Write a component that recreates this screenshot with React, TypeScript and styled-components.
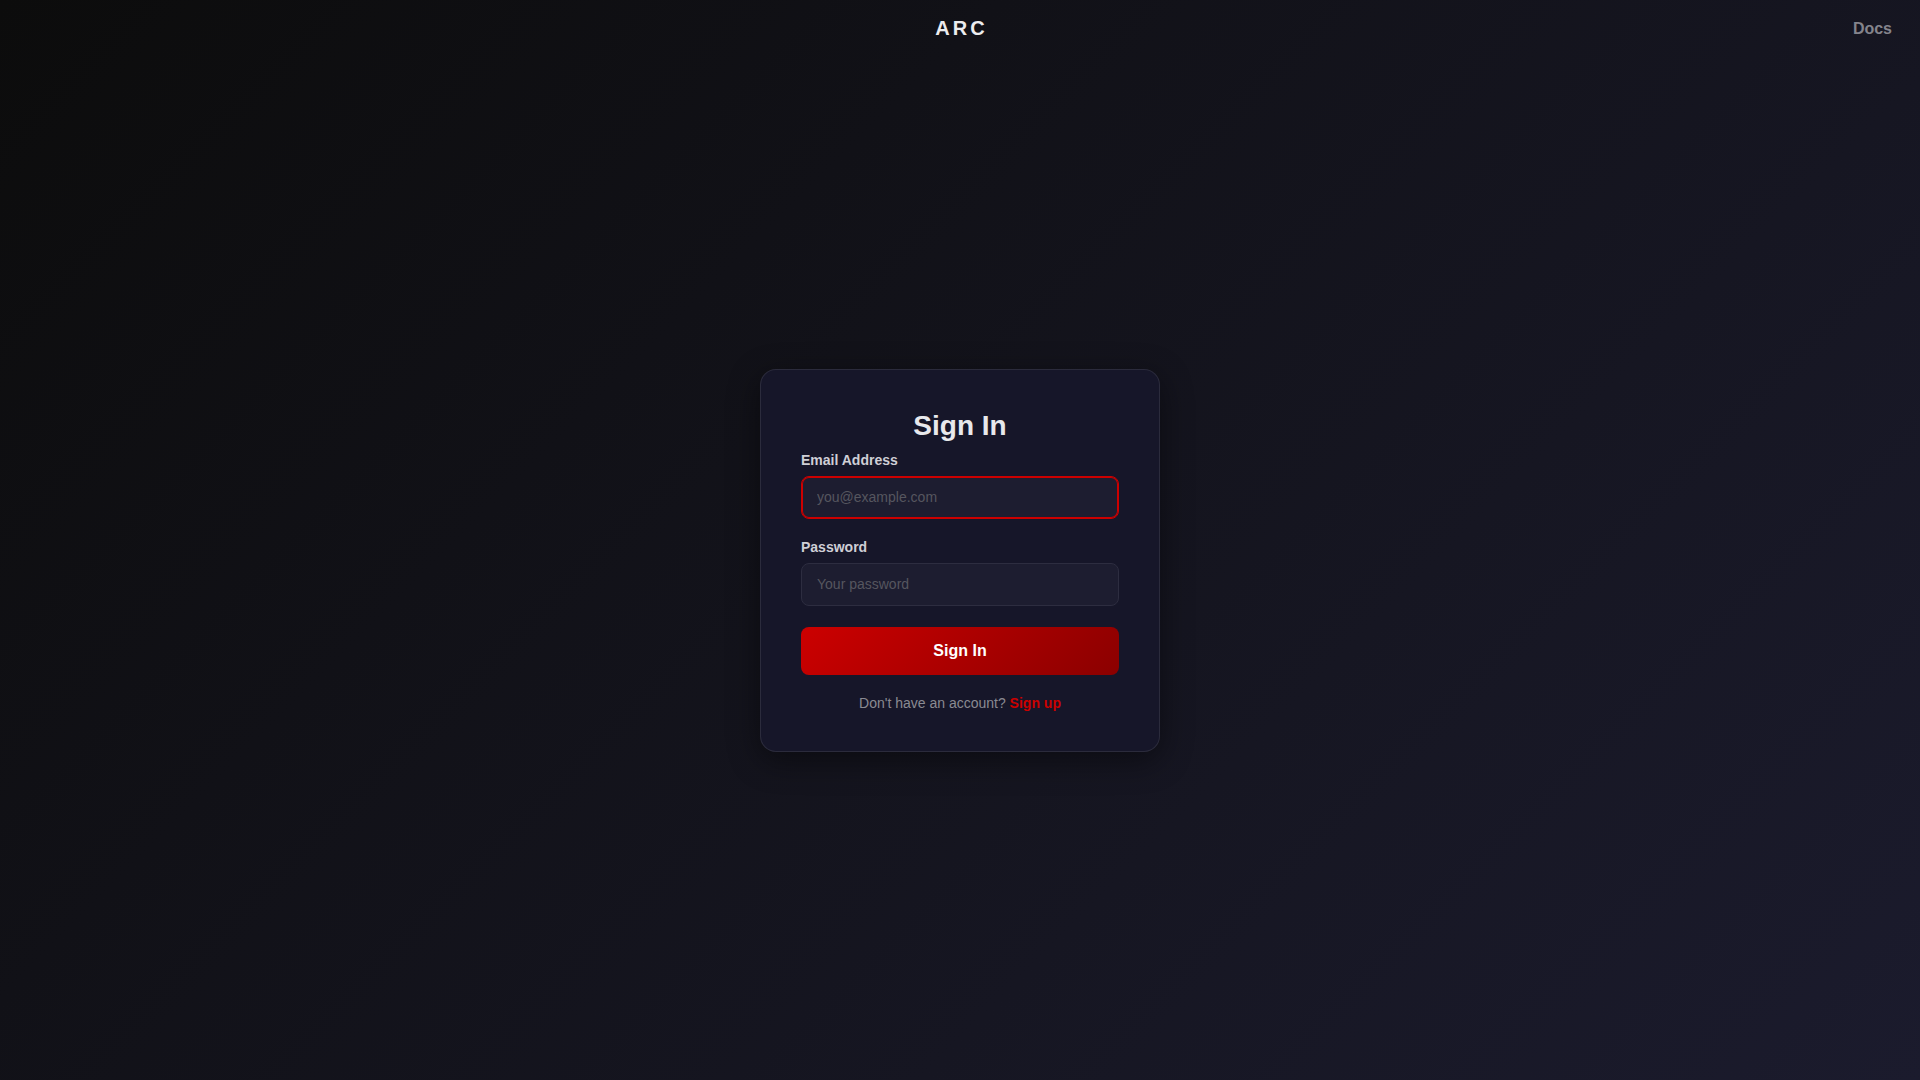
import styled, { createGlobalStyle } from "styled-components"

const GlobalStyle = createGlobalStyle`
  * {
    box-sizing: border-box;
  }
  html,
  body {
    margin: 0;
    padding: 0;
  }
  body {
    font-family: "Liberation Sans", Arial, sans-serif;
    background: linear-gradient(135deg, #0c0c0c 0%, #1b1b2d 100%);
    min-height: 100vh;
    color: #e8e8ec;
  }
`

const Page = styled.div`
  display: flex;
  flex-direction: column;
  min-height: 100vh;
`

const Header = styled.header`
  display: grid;
  grid-template-columns: 1fr auto 1fr;
  align-items: center;
  padding: 17px 28px 0;
`

const Logo = styled.div`
  grid-column: 2;
  font-size: 20px;
  font-weight: bold;
  letter-spacing: 3px;
  margin-right: -3px;
  color: #ececef;
`

const NavLink = styled.a`
  justify-self: end;
  font-size: 16px;
  font-weight: bold;
  color: #84848c;
  text-decoration: none;
  cursor: pointer;
`

const Main = styled.main`
  flex: 1;
  display: flex;
  align-items: center;
  justify-content: center;
`

const Card = styled.div`
  width: 400px;
  padding: 40px;
  background: #161629;
  border: 1px solid rgba(255, 255, 255, 0.09);
  border-radius: 16px;
  box-shadow: 0 8px 32px rgba(0, 0, 0, 0.45);
`

const Title = styled.h1`
  margin: 0 0 10px;
  font-size: 28px;
  font-weight: bold;
  text-align: center;
  color: #e8e8ec;
`

const Field = styled.div<{ last?: boolean }>`
  display: flex;
  flex-direction: column;
  margin-bottom: ${(props) => (props.last ? "21px" : "20px")};
`

const Label = styled.label`
  font-size: 14px;
  font-weight: bold;
  color: #cfcfd6;
  margin-bottom: 8px;
`

const Input = styled.input<{ active?: boolean }>`
  width: 100%;
  height: 43px;
  padding: 0 15px;
  font-family: "Liberation Sans", Arial, sans-serif;
  font-size: 14px;
  color: #e8e8ec;
  background: #1d1d30;
  border: 1px solid ${(props) => (props.active ? "#cc0000" : "#2d2d40")};
  box-shadow: ${(props) => (props.active ? "inset 0 0 0 1px #cc0000" : "none")};
  border-radius: 8px;
  outline: none;
  &::placeholder {
    color: #56565f;
  }
`

const Button = styled.button`
  width: 100%;
  height: 48px;
  border: none;
  border-radius: 8px;
  background: linear-gradient(135deg, #cc0000 0%, #8b0000 100%);
  color: #ffffff;
  font-family: "Liberation Sans", Arial, sans-serif;
  font-size: 16px;
  font-weight: bold;
  cursor: pointer;
`

const Footer = styled.p`
  margin: 20px 0 0;
  font-size: 14px;
  text-align: center;
  color: #8a8a92;
`

const FooterLink = styled.a`
  color: #cc0000;
  font-weight: bold;
  text-decoration: none;
  cursor: pointer;
`

export default function App() {
  return (
    <>
      <GlobalStyle />
      <Page>
        <Header>
          <Logo>ARC</Logo>
          <NavLink>Docs</NavLink>
        </Header>
        <Main>
          <Card>
            <Title>Sign In</Title>
            <Field>
              <Label>Email Address</Label>
              <Input type="email" placeholder="you@example.com" active />
            </Field>
            <Field last>
              <Label>Password</Label>
              <Input type="password" placeholder="Your password" />
            </Field>
            <Button>Sign In</Button>
            <Footer>
              Don't have an account? <FooterLink>Sign up</FooterLink>
            </Footer>
          </Card>
        </Main>
      </Page>
    </>
  )
}
